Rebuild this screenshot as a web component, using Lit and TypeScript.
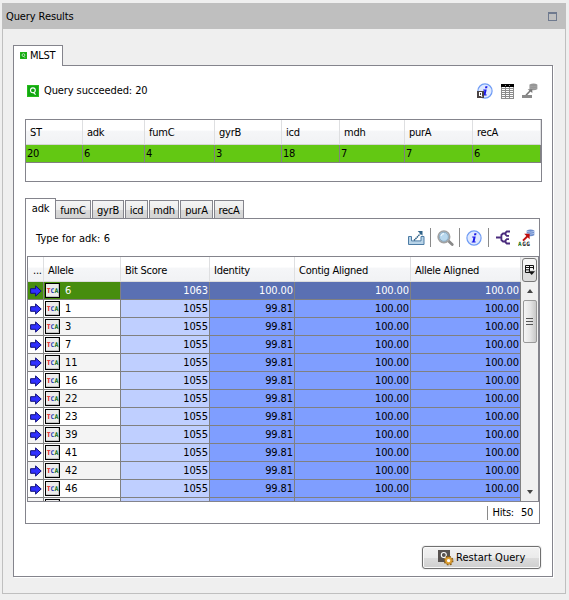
import { LitElement, html, svg, css, nothing } from "lit";
import { customElement } from "lit/decorators.js";
import { classMap } from "lit/directives/class-map.js";

const queryBadge = (size: number) => html`<svg class="icon" width=${size} height=${size} viewBox="0 0 12 12">
  <rect width="12" height="12" fill="#12a612"/><rect x=".5" y=".5" width="11" height="11" fill="none" stroke="#27bd1a"/>
  <circle cx="5.9" cy="5.3" r="2.4" fill="none" stroke="#fff" stroke-width="1.1"/><path d="M6.5 7.6 8.6 9.7" stroke="#fff" stroke-width="1.2"/></svg>`;

const infoShape = svg`<circle cx="8" cy="8" r="7.1" fill="#dfe9ff" stroke="#6f9cf5" stroke-width="1.2"/>
  <path d="M8.4 3.3h2.1l-.4 1.9H8zM6.3 6.4h3.4L8.6 11.4h1.2l-.3 1.1H5.6l.3-1.1h.7l.8-3.9H6z" fill="#1a1ae8"/>`;
const infoIcon = html`<svg class="icon" width="16" height="16" viewBox="0 0 16 16">${infoShape}</svg>`;
const queryInfoIcon = html`<svg class="icon" width="16" height="16" viewBox="0 0 16 16">${infoShape}
  <rect x="0" y="8" width="7" height="7" fill="#4b4444"/><rect x="2.5" y="9.5" width="2" height="3" fill="none" stroke="#fff"/><path d="M4 12.5l1.2 1.5" stroke="#fff"/></svg>`;
const tableIcon = html`<svg class="icon" width="13" height="15" viewBox="0 0 13 15" shape-rendering="crispEdges">
  <rect width="13" height="15" fill="#8c8c8c"/><rect width="13" height="3" fill="#000"/>
  <path d="M4 1h1v1H4zM8 1h1v1H8z" fill="#999"/>
  ${[3, 5, 7, 9, 11, 13].map((y) => svg`<path d="M1 ${y}h3v1H1zM5 ${y}h3v1H5zM9 ${y}h3v1H9z" fill="#fff"/>`)}</svg>`;
const grayBlastIcon = html`<svg class="icon" width="16" height="16" viewBox="0 0 16 16">
  <path d="M7.5 1.6Q11.5-.6 15.3 1.5V6.2Q11.5 8.2 7.5 6.2z" fill="#969696"/><path d="M7.5 3q4 1.6 7.8 0M7.5 5q4 1.6 7.8 0" fill="none" stroke="#a8a8a8" stroke-width=".7"/>
  <path d="M4 12.3 9 7" stroke="#777" stroke-width="1.6"/><path d="M5.7 6.3h4.6V10z" fill="#777"/><path d="M0 12h10v3H0z" fill="#8b8b8b"/></svg>`;
const exportIcon = html`<svg class="icon" width="17" height="16" viewBox="0 0 17 16">
  <path d="M3.5 6.5h-3v8h15.5v-8h-3v4.4H3.5z" fill="#b9d4e8" stroke="#4d7ca5"/><path d="M6 10.5 13 3" stroke="#2f6288" stroke-width="1.4" stroke-dasharray="1.6 .5"/><path d="M9.7 1h4.8v4.8z" fill="#2f6288"/></svg>`;
const searchIcon = html`<svg class="icon" width="17" height="16" viewBox="0 0 17 16">
  <path d="m11 10.5 4.2 4" stroke="#8a8a8a" stroke-width="2.8" stroke-linecap="round"/><circle cx="6.9" cy="6.8" r="5.8" fill="#b8d8ee" stroke="#a2a2a2" stroke-width="1.6"/><circle cx="6.9" cy="6.8" r="4.5" fill="none" stroke="#7897ad" stroke-width=".7"/><path d="M4 6q.5-2.2 3-2.5" fill="none" stroke="#e9f5fc" stroke-width="1.3"/></svg>`;
const treeIcon = html`<svg class="icon" width="15" height="15" viewBox="0 0 15 15">
  <path d="M0 7.5h5M9 3.5H7L5.4 5v5L7 11.5h2M14 1.5h-3.2L9.6 2.7v2l1.2 1.1H13M13 9.2h-2.2l-1.2 1.1v2l1.2 1.2H14" fill="none" stroke="#4a2b7d" stroke-width="1.8"/></svg>`;
const blastIcon = html`<svg class="icon" width="17" height="17" viewBox="0 0 17 17">
  <path d="M8.7 1.6Q12.5-.5 16.3 1.5V6.2Q12.5 8.4 8.7 6.2z" fill="#6c8ccc"/><path d="M8.7 2.4q3.8 1.5 7.6 0M8.7 4.4q3.8 1.6 7.6 0" fill="none" stroke="#b4c8ee" stroke-width=".9"/>
  <path d="M5 11.6 10 6.7" stroke="#c00d0d" stroke-width="1.9"/><path d="M6.2 4.8h5.4v5.4z" fill="#c00d0d"/>
  <text x="0" y="16.5" class="tiny" fill="#117011">A</text><text x="4.2" y="16.5" class="tiny" fill="#222">G</text><text x="8.2" y="16.5" class="tiny" fill="#222">G</text></svg>`;
const arrowIcon = html`<svg class="icon" width="12" height="12" viewBox="0 0 12 12">
  <path d="M.6 3.7h5V.9L11.2 6l-5.6 5.1V8.3h-5z" fill="#3030ff" stroke="#10107a" stroke-width="1"/></svg>`;
const tcaIcon = (lettered: boolean) => html`<svg class="icon" width="15" height="15" viewBox="0 0 15 15">
  <rect width="15" height="15" fill="#000"/><rect x="1" y="1" width="13" height="13" fill="#c4c4c4"/><rect x="1" y="1" width="12" height="12" fill="#ececec"/>
  ${lettered ? svg`<text x="1.7" y="9.6" class="tca" fill="#e01212">T</text><text x="5.5" y="9.6" class="tca" fill="#2a3ab0">C</text><text x="9.4" y="9.6" class="tca" fill="#107018">A</text>` : nothing}</svg>`;
const restartIcon = html`<svg class="icon" width="16" height="16" viewBox="0 0 16 16">
  <rect width="12" height="12" fill="#575250"/><circle cx="5.8" cy="5" r="2.5" fill="none" stroke="#fff" stroke-width="1.1"/><path d="M6.4 7.4 8 9" stroke="#fff" stroke-width="1.2"/>
  <circle cx="10.6" cy="10.6" r="3.9" fill="none" stroke="#8a5c14" stroke-width="2" stroke-dasharray="1.6 1.46"/><circle cx="10.6" cy="10.6" r="2.7" fill="#fff" stroke="#e0a030" stroke-width="2"/><circle cx="10.6" cy="10.6" r="3.7" fill="none" stroke="#9a6a1c" stroke-width=".5"/></svg>`;
const columnsIcon = html`<svg class="icon" width="10" height="11" viewBox="0 0 10 11">
  <path d="M5 7.5H.5v-7h8v4M.5 2.5h8M4.5.5v6M.5 4.8h4" fill="none" stroke="#111"/><path d="M3.4 6.2H10L6.7 10z" fill="#111"/></svg>`;

const loci = ["adk", "fumC", "gyrB", "icd", "mdh", "purA", "recA"];
const profile = ["20", "6", "4", "3", "18", "7", "7", "6"];
const alleles = [6, 1, 3, 7, 11, 16, 22, 23, 39, 41, 42, 46];

@customElement("app-root")
export class AppRoot extends LitElement {
  static styles = css`
    :host { display: block; width: 569px; height: 600px; padding: 3px 3px 6px 2px; box-sizing: border-box; overflow: hidden;
      background: #efefef; color: #000; font: 11px/14px "DejaVu Sans Condensed", "DejaVu Sans", sans-serif; font-stretch: condensed; letter-spacing: -0.25px; }
    * { box-sizing: border-box; }
    .icon { display: block; flex: none; }
    .window { height: 591px; border: 1px solid #bfbfbf; border-top: 0; }
    .title { display: flex; align-items: center; justify-content: space-between; height: 26px; margin: 0 -1px; padding: 0 9px 0 4px; background: #bfbfbf; letter-spacing: -0.1px; }
    .title span:first-child { padding-top: 1px; }
    .max { width: 9px; height: 9px; border: 1px solid #6f7a8f; border-top-width: 2px; margin-top: 1px; }
    .top-tab { display: flex; align-items: center; gap: 3px; width: 50px; height: 21px; margin: 16px 0 0 10px; padding: 0 0 1px 6px; border: 1px solid #84848c; border-bottom: 0; background: #fff; position: relative; }
    .page { height: 512px; width: 540px; margin: -1px 0 0 10px; border: 1px solid #84848c; background: #fff; box-shadow: 1px 1px #fff; padding: 0 10px 0 11px; }
    .status { display: flex; align-items: center; height: 53px; padding: 0 4px 3px 2px; letter-spacing: -0.1px; }
    .status .msg { margin-left: 5px; flex: 1; }
    .status .tools { display: flex; align-items: center; gap: 8px; }
    .profile { height: 63px; width: 517px; border: 1px solid #84848c; }
    .cols { display: grid; grid-template-columns: 57px 62px 70px 67px 58px 65px 68px 68px; }
    .head { background: linear-gradient(#fff 0 40%, #f5f6f8 45%, #f1f2f4); }
    .head .hc { height: 25px; padding: 2px 0 0 4px; display: flex; align-items: center; border-right: 1px solid #dedfe1; border-bottom: 1px solid #d5d5d5; white-space: nowrap; }
    .row1 { background: #63c813; }
    .row1 .c { height: 18px; padding: 2px 0 0 1px; border-right: 1px solid #808080; border-bottom: 1px solid #808080; }
    .tabs { display: flex; align-items: flex-end; margin-top: 16px; height: 20px; }
    .tab { height: 18px; border: 1px solid #84848c; border-bottom: 0; background: linear-gradient(#f4f4f4, #ececec 50%, #dadada 55%, #d3d3d3); display: flex; align-items: center; justify-content: center; padding-top: 2px; margin-right: 1px; }
    .tab.on { height: 21px; margin: 0 0 -1px; background: #fff; padding: 0; position: relative; }
    .pane { width: 515px; height: 306px; border: 1px solid #84848c; padding: 0 0 0 1px; }
    .bar { display: flex; align-items: center; height: 37px; padding-left: 9px; }
    .bar .label { flex: none; width: 366px; padding-top: 3px; letter-spacing: 0.05px; }
    .sep { flex: none; width: 1px; height: 19px; background: #8a8a8a; }
    .slot { flex: none; display: flex; justify-content: center; width: 28px; }
    .slot.wide { width: 29px; }
    .grid { display: flex; height: 246px; width: 512px; border: 1px solid #84848c; overflow: hidden; }
    .body { width: 493px; }
    .hit { display: grid; grid-template-columns: 16px 77px 89px 85px 116px 110px; }
    .body .hc:first-child { padding-left: 5px; }
    .body .head .hc { height: 25px; border-bottom: 1px solid #dcdcdc; padding-top: 3px; }
    .n { height: 18px; border-right: 1px solid #808080; border-bottom: 1px solid #808080; padding: 2px 1px 0 0; text-align: right; background: #7f9eff; letter-spacing: -0.1px; }
    .n.id { display: flex; align-items: center; justify-content: flex-start; padding: 0 0 0 1px; gap: 5px; background: #fff; }
    .n.arrow { padding-left: 2px; }
    .n.bit { background: #bfcfff; }
    .alt .n.id { background: #f4f4f4; }
    .sel .n { background: #5a70b3; color: #fff; }
    .sel .n.id { background: #478d0e; }
    .scroll { width: 17px; display: flex; flex-direction: column; align-items: center; background: #f0f0f0; }
    .corner { width: 15px; height: 24px; margin-top: 1px; border: 1px solid #777; border-radius: 3px; background: linear-gradient(#f5f5f5 50%, #dcdcdc 50%); display: flex; align-items: center; justify-content: center; }
    .up, .down { width: 0; height: 0; border: 3.5px solid transparent; }
    .up { border-top: 0; border-bottom: 4px solid #444; margin-top: 7px; }
    .down { border-bottom: 0; border-top: 4px solid #444; margin: auto 0 7px; }
    .thumb { width: 14px; height: 43px; margin-top: 7px; border: 1px solid #999; border-radius: 2px; background: linear-gradient(90deg, #f5f5f5, #e6e6e6 50%, #c8c8c8); display: flex; flex-direction: column; align-items: center; justify-content: center; gap: 2px; }
    .grip { width: 7px; height: 1px; background: #555; }
    .foot { display: flex; align-items: center; justify-content: flex-end; height: 21px; padding-right: 6px; }
    .foot .sep { height: 14px; margin-right: 5px; }
    .foot .count { margin-left: 7px; }
    .restart { display: flex; align-items: center; gap: 2px; width: 119px; height: 23px; margin: 22px 0 0 397px; padding: 0 0 0 15px; border: 1px solid #707070; border-radius: 3px; box-shadow: inset 0 0 0 1px #fafafa, 0 0 0 1px #f2f2f2; background: linear-gradient(#f2f2f2, #ebebeb 50%, #dddddd 50%, #cfcfcf); font: inherit; letter-spacing: 0.05px; color: inherit; white-space: nowrap; }
    .tiny { font: bold 6px "DejaVu Sans Mono", monospace; letter-spacing: 0; }
    .tca { font: bold 6.5px "DejaVu Sans Mono", monospace; letter-spacing: 0; }
    .w31 { width: 31px; } .w36 { width: 36px; margin-left: -1px; } .w32 { width: 32px; } .w23 { width: 23px; } .w30 { width: 30px; } .w33 { width: 33px; }
  `;

  private hit(allele: number | null, i: number) {
    const first = i === 0;
    const values = allele === null ? ["", "", "", ""] : [first ? "1063" : "1055", first ? "100.00" : "99.81", "100.00", "100.00"];
    return html`<div class="hit ${classMap({ sel: first, alt: i % 2 === 0 })}">
      <div class="n id arrow">${arrowIcon}</div>
      <div class="n id">${tcaIcon(allele !== null)}<span>${allele ?? nothing}</span></div>
      ${values.map((v, c) => html`<div class="n ${c ? "" : "bit"}">${v}</div>`)}</div>`;
  }

  render() {
    const tabWidths = ["w31", "w36", "w32", "w23", "w30", "w33", "w30"];
    return html`<div class="window">
      <div class="title"><span>Query Results</span><span class="max"></span></div>
      <div class="top-tab">${queryBadge(7)}<span>MLST</span></div>
      <div class="page">
        <div class="status">${queryBadge(12)}<span class="msg">Query succeeded: 20</span>
          <div class="tools">${queryInfoIcon}${tableIcon}${grayBlastIcon}</div></div>
        <div class="profile">
          <div class="cols head">${["ST", ...loci].map((t) => html`<div class="hc">${t}</div>`)}</div>
          <div class="cols row1">${profile.map((t) => html`<div class="c">${t}</div>`)}</div>
        </div>
        <div class="tabs">${loci.map((t, i) => html`<div class="tab ${tabWidths[i]} ${i ? "" : "on"}">${t}</div>`)}</div>
        <div class="pane">
          <div class="bar"><span class="label">Type for adk: 6</span>
            <span class="slot">${exportIcon}</span><span class="sep"></span>
            <span class="slot">${searchIcon}</span><span class="sep"></span>
            <span class="slot">${infoIcon}</span><span class="sep"></span>
            <span class="slot wide">${treeIcon}</span>${blastIcon}
          </div>
          <div class="grid">
            <div class="body">
              <div class="hit head">${["...", "Allele", "Bit Score", "Identity", "Contig Aligned", "Allele Aligned"].map((t) => html`<div class="hc">${t}</div>`)}</div>
              ${[...alleles, null].map((a, i) => this.hit(a, i))}
            </div>
            <div class="scroll">
              <div class="corner">${columnsIcon}</div><div class="up"></div>
              <div class="thumb"><span class="grip"></span><span class="grip"></span><span class="grip"></span></div>
              <div class="down"></div>
            </div>
          </div>
          <div class="foot"><span class="sep"></span><span>Hits:</span><span class="count">50</span></div>
        </div>
        <button class="restart">${restartIcon}<span>Restart Query</span></button>
      </div>
    </div>`;
  }
}
